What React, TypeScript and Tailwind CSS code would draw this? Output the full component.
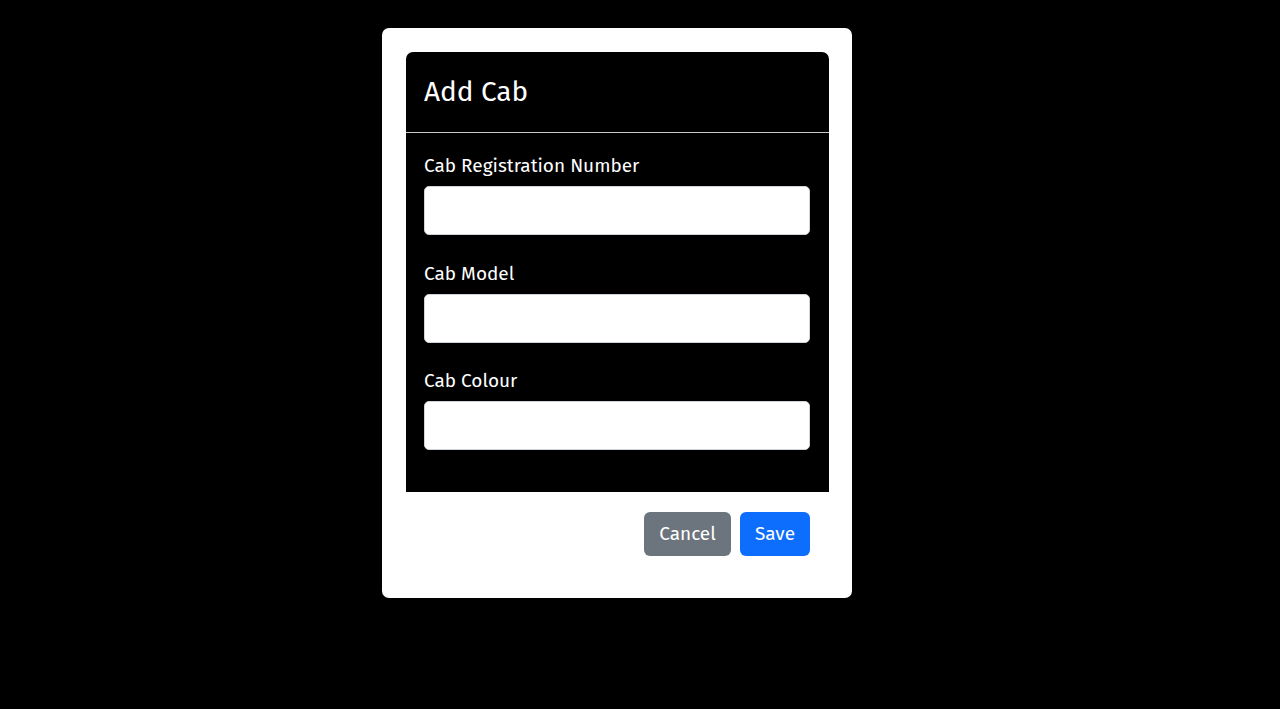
import React from "react";

export default function App() {
  const font = { fontFamily: '"Fira Sans", "Noto Sans", "Open Sans", sans-serif' };
  const fields = ["Cab Registration Number", "Cab Model", "Cab Colour"];
  return (
    <div className="min-h-[709px] w-full bg-black" style={font}>
      <div className="flex justify-center pt-[28px]">
        <div className="mr-[46px] w-[470px] rounded-[7px] bg-white pl-[24px] pr-[23px] pt-[24px] pb-[42px]">
          <div className="rounded-t-[7px] bg-black text-white">
            <div className="flex h-[81px] items-center border-b border-[#c8c8c8] px-[18px]">
              <h1 className="text-[28px] leading-none font-normal">Add Cab</h1>
            </div>
            <div className="pl-[18px] pr-[19px] pt-[21px] pb-[15px]">
              {fields.map((f, i) => (
                <div key={f} className={i < 2 ? "mb-[26.5px]" : "mb-[27px]"}>
                  <label className="block text-[19px] font-normal leading-[24px] mb-[8px]">{f}</label>
                  <input
                    type="text"
                    className="block h-[49px] w-full rounded-[5px] border border-[#ced4da] bg-white px-3 text-black outline-none"
                  />
                </div>
              ))}
            </div>
          </div>
          <div className="flex justify-end gap-[9px] pr-[19px] pt-[20px]">
            <button className="h-[44px] w-[87px] rounded-[6px] bg-[#6c757d] text-[19px] text-white">
              Cancel
            </button>
            <button className="h-[44px] w-[70px] rounded-[6px] bg-[#0d6efd] text-[19px] text-white">
              Save
            </button>
          </div>
        </div>
      </div>
    </div>
  );
}
